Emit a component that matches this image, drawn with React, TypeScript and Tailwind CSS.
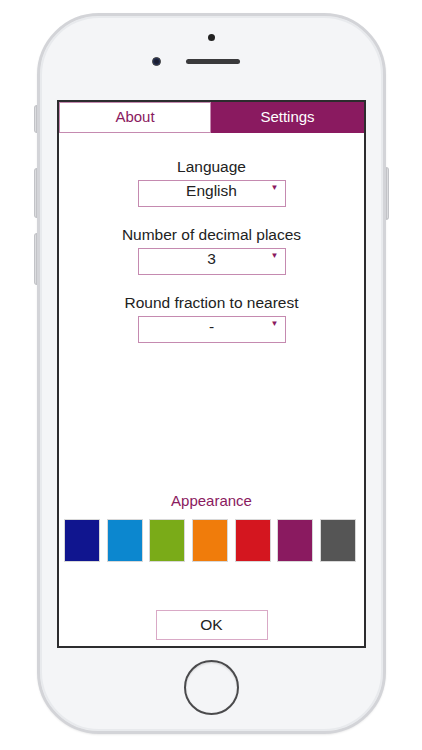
import { ReactNode } from 'react'

const purple = '#8a1a60'

const swatches = ['#10158f', '#0c87cf', '#7aab18', '#f07c0b', '#d4161f', '#8a1a60', '#555555']

function Field({ label, value, children }: { label: string; value: string; children?: ReactNode }) {
  return (
    <div className="flex flex-col items-center">
      <div className="text-[15.5px] leading-[18px] text-[#222]">{label}</div>
      <div className="relative mt-[4px] w-[148px] h-[27px] border border-[#c58ab0] flex justify-center">
        <span className="text-[15.5px] leading-[18px] mt-[1px] text-[#222]">{value}</span>
        <span className="absolute right-[6px] top-[2px] text-[8px] leading-[10px]" style={{ color: purple }}>
          ▼
        </span>
      </div>
      {children}
    </div>
  )
}

export default function App() {
  return (
    <div className="w-[422px] h-[750px] bg-white overflow-hidden" style={{ fontFamily: '"Liberation Sans", Arial, sans-serif' }}>
      <div className="relative ml-[37px] mt-[13px] w-[349px] h-[721px] rounded-[62px] border-[3px] border-[#d3d4d8] bg-[#f4f5f7] shadow-[inset_0_0_0_2px_#e8eaed,0_1px_2px_rgba(0,0,0,0.08)]">
        {/* side buttons */}
        <div className="absolute left-[-6px] top-[89px] w-[3px] h-[28px] rounded-l bg-[#dcdde0] border border-[#c2c3c7]" />
        <div className="absolute left-[-6px] top-[152px] w-[3px] h-[50px] rounded-l bg-[#dcdde0] border border-[#c2c3c7]" />
        <div className="absolute left-[-6px] top-[217px] w-[3px] h-[52px] rounded-l bg-[#dcdde0] border border-[#c2c3c7]" />
        <div className="absolute right-[-6px] top-[151px] w-[3px] h-[53px] rounded-r bg-[#dcdde0] border border-[#c2c3c7]" />

        {/* top sensors */}
        <div className="flex flex-col items-center">
          <div className="mt-[18px] w-[7px] h-[7px] rounded-full bg-[#222]" />
          <div className="mt-[16px] flex items-center ml-[-32px]">
            <div className="w-[9px] h-[9px] rounded-full bg-[#1a1d2e] border border-[#444] shadow-[inset_0_0_2px_#3050a0]" />
            <div className="ml-[25px] w-[54px] h-[5px] rounded-full bg-[#3a3a3c]" />
          </div>
        </div>

        {/* screen */}
        <div className="ml-[17px] mt-[34px] w-[309px] h-[548px] border-2 border-[#2c2c2e] bg-white flex flex-col">
          <div className="flex h-[31px]">
            <div className="w-[152px] border border-[#c58ab0] flex items-center justify-center text-[15px]" style={{ color: purple }}>
              About
            </div>
            <div className="flex-1 flex items-center justify-center text-[15px] text-white" style={{ backgroundColor: purple }}>
              Settings
            </div>
          </div>

          <div className="mt-[25px] flex flex-col gap-[19px]">
            <Field label="Language" value="English" />
            <Field label="Number of decimal places" value="3" />
            <Field label="Round fraction to nearest" value="-" />
          </div>

          <div className="mt-[149px] text-center text-[15px] leading-[18px]" style={{ color: purple }}>
            Appearance
          </div>
          <div className="mt-[9px] ml-[5px] flex gap-[6.7px]">
            {swatches.map((c) => (
              <div key={c} className="w-[36px] h-[43px] border border-[#d8d8d8]" style={{ backgroundColor: c }} />
            ))}
          </div>

          <div className="mt-[48px] self-center w-[112px] h-[30px] border border-[#d9a9c6] flex items-center justify-center text-[15.5px] text-[#222]">
            OK
          </div>
        </div>

        {/* home button */}
        <div className="mt-[12px] mx-auto w-[55px] h-[55px] rounded-full border-[2px] border-[#4a4a4c] bg-[#f4f5f7] shadow-[inset_0_1px_2px_rgba(0,0,0,0.15)]" />
      </div>
    </div>
  )
}
